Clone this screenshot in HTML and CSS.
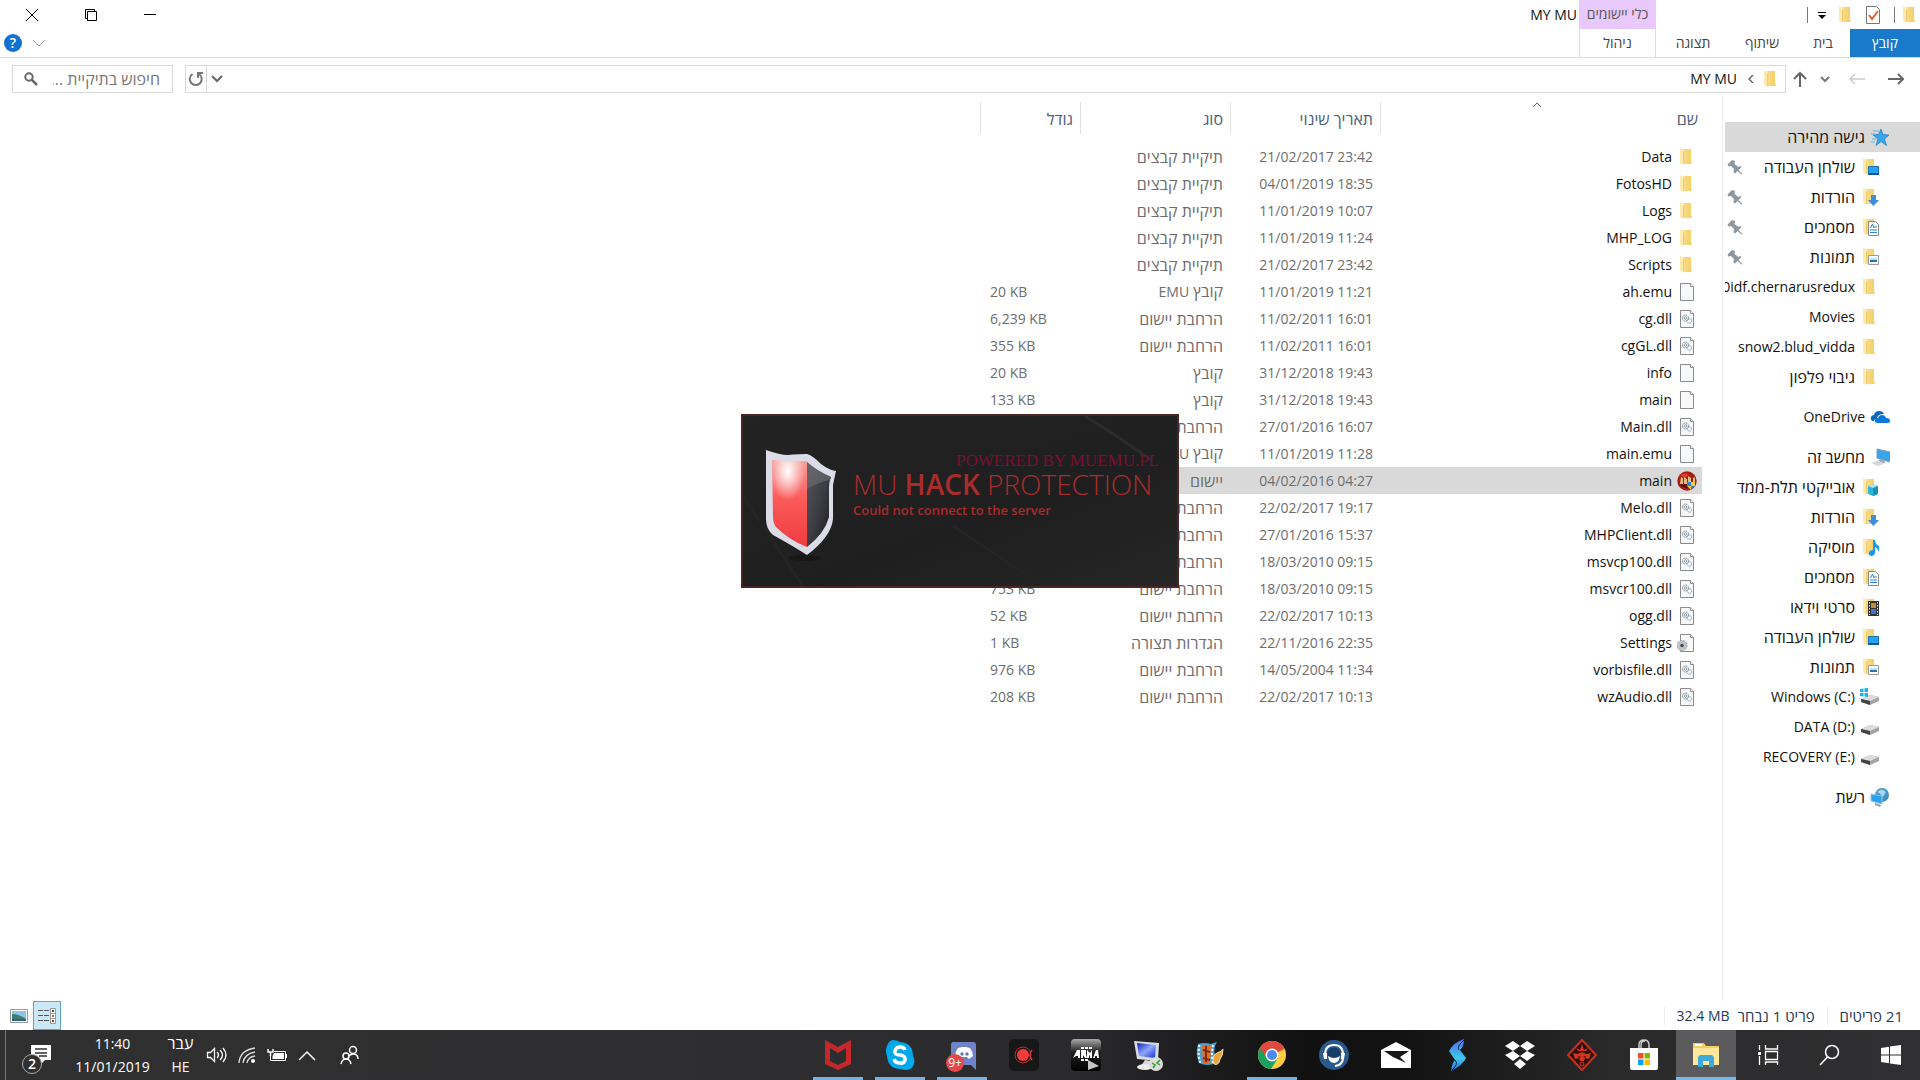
FILE: index.html
```html
<!DOCTYPE html>
<html lang="he" dir="rtl">
<head>
<meta charset="utf-8">
<title>MY MU</title>
<link rel="stylesheet" href="styles.css">
</head>
<body>
<svg class="sprite" width="0" height="0" aria-hidden="true">
  <defs>
    <linearGradient id="gFold" x1="0" x2="1"><stop offset="0" stop-color="#f9dc8c"/><stop offset="1" stop-color="#f4cf63"/></linearGradient>
    <linearGradient id="gRed" x1="0" y1="0" x2="0" y2="1"><stop offset="0" stop-color="#f6a09a"/><stop offset=".45" stop-color="#fb5a5a"/><stop offset="1" stop-color="#f03c40"/></linearGradient>
    <radialGradient id="gShine" cx=".45" cy=".2" r=".5"><stop offset="0" stop-color="#fff"/><stop offset="1" stop-color="#fff" stop-opacity="0"/></radialGradient>
    <linearGradient id="gDark" x1="0" y1="0" x2="1" y2="1"><stop offset="0" stop-color="#55555a"/><stop offset=".5" stop-color="#3d3d44"/><stop offset="1" stop-color="#19191c"/></linearGradient>
    <linearGradient id="gS" x1="0" y1="0" x2="0" y2="1"><stop offset="0" stop-color="#4d6cf0"/><stop offset=".6" stop-color="#3fc8ea"/><stop offset="1" stop-color="#2a6fe0"/></linearGradient>
    <linearGradient id="gArma" x1="0" y1="0" x2="0" y2="1"><stop offset="0" stop-color="#aaa"/><stop offset=".4" stop-color="#222"/><stop offset="1" stop-color="#000"/></linearGradient>
    <linearGradient id="gMon" x1="0" y1="0" x2="1" y2="1"><stop offset="0" stop-color="#0a1fae"/><stop offset=".5" stop-color="#8fa6ff"/><stop offset="1" stop-color="#1130d0"/></linearGradient>
    <symbol id="folder" viewBox="0 0 20 20"><path d="M6 2h8v12l1 2-1 1H6z" fill="url(#gFold)"/><path d="M3 1l4 2v13l-1 2-3-2z" fill="#fdeab0"/><path d="M6 5v12l1-1V4z" fill="#efcb6b"/></symbol>
    <symbol id="file" viewBox="0 0 20 20"><path d="M3.500 1.500h10l3 3v14h-13z" fill="#f7f8fa" stroke="#8b8b8b"/><path d="M13.500 1.500v3h3" fill="#fff" stroke="#8b8b8b"/></symbol>
    <symbol id="dll" viewBox="0 0 20 20"><use href="#file"/><g fill="none"><circle cx="8.500" cy="9" r="3" stroke="#6c7781" stroke-dasharray="1 .6"/><circle cx="8.500" cy="9" r="1.300" stroke="#899"/><circle cx="12.500" cy="12" r="2.200" stroke="#6a97b7" stroke-dasharray="1 .5"/></g></symbol>
    <symbol id="ini" viewBox="0 0 20 20"><use href="#file"/><circle cx="5" cy="12.500" r="5" fill="#bfc5c9" stroke="#98a0a5" stroke-dasharray="2 1"/><circle cx="5" cy="12.500" r="1.700" fill="#444"/></symbol>
    <symbol id="game" viewBox="0 0 20 20"><circle cx="10" cy="10" r="9.700" fill="#a81c16"/><path d="M3 4q5-3 9 0l-4 3z" fill="#e0402a"/><path d="M2 14q8 7 15-1l-5-2z" fill="#641010"/><path d="M3 13l1-7 2 1v6zm4 0V6l3 2v5zm4-1V5l3 2v5zm5-1V7l2-1v5z" fill="#e5bd83"/><path d="M10 11h4v4h-4z" fill="#2d7fd1"/><path d="M14 11h4v4h-4z" fill="#f4cd3a"/><path d="M10 15h4v4z" fill="#f4cd3a"/><path d="M14 15h4l-4 4z" fill="#2d7fd1"/></symbol>
    <symbol id="desk" viewBox="0 0 20 20"><use href="#folder"/><path d="M8.500 9.500h10v8h-10z" fill="#25a3f2" stroke="#1871b4"/><path d="M8 16h11v2H8z" fill="#135a95"/></symbol>
    <symbol id="down" viewBox="0 0 20 20"><use href="#folder"/><path d="M11 8h5v5h3l-5.500 6L8 13h3z" fill="#3d8fd9"/></symbol>
    <symbol id="docs" viewBox="0 0 20 20"><use href="#folder"/><path d="M8.500 4.500h7l3 3v11h-10z" fill="#fff" stroke="#888"/><path d="M10 13h7M10 15.500h7M14 10h3" stroke="#2a86cf"/><path d="M10.500 11l2-4 1.500 4" stroke="#2a86cf" fill="none"/></symbol>
    <symbol id="pics" viewBox="0 0 20 20"><use href="#folder"/><path d="M8.500 8.500h10v9h-10z" fill="#fff" stroke="#999"/><path d="M10 11h7v4h-7z" fill="#b6e0f5"/><path d="M10 13h7v2h-7z" fill="#336f9b"/></symbol>
    <symbol id="cube" viewBox="0 0 20 20"><use href="#folder"/><path d="M8 9l5-1.500L18 9v8l-5 2-5-2z" fill="#2fb8d6"/><path d="M8 9l5-1.500L18 9l-5 2z" fill="#a6e8f2"/><path d="M13 11l5-2v8l-5 2z" fill="#1793ba"/></symbol>
    <symbol id="music" viewBox="0 0 20 20"><use href="#folder"/><path d="M13 3h2q0 4 4 6 1 3-1 6 0-4-3-5v5q0 4-4 4-3-1-2-4 1-2 4-2z" fill="#159af0"/></symbol>
    <symbol id="video" viewBox="0 0 20 20"><use href="#folder"/><path d="M8 4h11v15H8z" fill="#333"/><path d="M11 6h5v5h-5z" fill="#c28d3c"/><path d="M11 12h5v5h-5z" fill="#3f74c9"/><path d="M9.500 5v13M17.500 5v13" stroke="#eee" stroke-dasharray="1.500 1.500"/></symbol>
    <symbol id="drive" viewBox="0 0 20 20"><path d="M1 12l9-4 9 2v4l-9 4-9-3z" fill="#a4a4a4"/><path d="M1 12l9-4 9 2-9 4z" fill="#dcdcdc"/><path d="M1 12l9 2v4l-9-3z" fill="#444"/></symbol>
    <symbol id="windrive" viewBox="0 0 20 20"><use href="#drive"/><path d="M0 2l3.500-.5V5H0zM4.500 1.300L8 1v4H4.500zM0 6h3.500v3.500L0 9zM4.500 6H8v4l-3.500-.5z" fill="#12b4ea"/></symbol>
    <symbol id="star" viewBox="0 0 20 20"><path d="M11 2l2 5.500 6 .5-4.500 4 2 6.500-5.500-4-5 4 2-6.500L3 8l5.500-.5z" fill="#38a7ee" stroke="#187bc0" stroke-width=".7"/><path d="M3 4h6M1 7h5M2 12h4M1 15h4" stroke="#5cb8f0"/></symbol>
    <symbol id="cloud" viewBox="0 0 20 20"><path d="M3 14q-3-1-2-4 1-2 3-2 1-4 5-4 4 0 5 3-7 0-7 5-3 0-3 2z" fill="#0c66bd"/><path d="M7 16q-3-1-2-3 1-2 3-2 1-3 4-3t4 3q4 0 4 3 0 2-2 2z" fill="#0a78d6"/></symbol>
    <symbol id="pc" viewBox="0 0 20 20"><path d="M7 2l13 3v10L7 11z" fill="#36a6e8" stroke="#7a9cb5"/><path d="M1 16l8-3 7 3-8 3z" fill="#d3d7de"/><path d="M10 12l5 2-1 2-5-2z" fill="#9ba4b0"/></symbol>
    <symbol id="net" viewBox="0 0 20 20"><circle cx="12" cy="8" r="7" fill="#4592c2"/><path d="M7 5q5-5 9 0l-3 5q-3-4-6-5z" fill="#a6d4ea"/><path d="M1 7l11 2v8L1 14z" fill="#2ea0e8" stroke="#8fc6ea"/><path d="M5 16l6 2-1 2-5-2z" fill="#8ea5b6"/></symbol>
    <symbol id="pin" viewBox="0 0 16 16"><path d="M5 1l3 1-.5 3 4 3 2-1 1 1-3 3 4 4-1 .5-4-3.500-2.500 2.500-1.500-1L7 10 4 7 1.500 7.500l-1-2z" fill="#8d979d"/></symbol>
    <symbol id="details" viewBox="0 0 20 20"><path d="M1 4.500h5M7 4.500h5M1 9.500h5M7 9.500h5M1 14.500h5M7 14.500h5" stroke="#555"/><path d="M13.500 2.500h5v15h-5zM13.500 7.500h5M13.500 12.500h5" stroke="#999" fill="#fff"/><path d="M15 4h2v2h-2z" fill="#358"/><path d="M15 9h2v2h-2z" fill="#874"/><path d="M15 14h2v2h-2z" fill="#b22"/></symbol>
  </defs>
</svg>

<div class="window">
  <header class="top">
    <div class="ribbon">
      <div class="start-side">
        <div class="quick">
          <svg width="20" height="20"><use href="#folder"/></svg>
          <i class="bar"></i>
          <svg class="props" width="20" height="20" viewBox="0 0 20 20"><path d="M3.500 1.500h10l3 3v14h-13z" fill="#fff" stroke="#777"/><path d="M6 10l3 4 6-8" stroke="#e2622b" stroke-width="2" fill="none"/></svg>
          <svg width="20" height="20"><use href="#folder"/></svg>
          <svg class="more" width="8" height="8" viewBox="0 0 8 8"><path d="M0 1.500h8" stroke="#000"/><path d="M0 4h8L4 8z"/></svg>
          <i class="bar"></i>
        </div>
        <nav class="tabs">
          <button class="tab file-tab">קובץ</button><button class="tab tab-home">בית</button><button class="tab tab-share">שיתוף</button><button class="tab tab-view">תצוגה</button>
        </nav>
      </div>
      <div class="context"><div class="context-title">כלי יישומים</div><button class="context-tab">ניהול</button></div>
      <h1 class="title">MY MU</h1>
      <div class="end-side">
        <div class="controls">
          <button aria-label="מזעור"><svg width="14" height="14" viewBox="0 0 14 14"><path d="M1 6.500h12" stroke="#000"/></svg></button>
          <button aria-label="שחזור"><svg width="14" height="14" viewBox="0 0 14 14"><path d="M3.500 3.500h9v9h-9zM3.500 10.500h-2v-9h9v2" fill="none" stroke="#000"/></svg></button>
          <button aria-label="סגירה"><svg width="14" height="14" viewBox="0 0 14 14"><path d="M1 1l12 12M13 1L1 13" stroke="#000"/></svg></button>
        </div>
        <div class="help">
          <svg width="14" height="8" viewBox="0 0 14 8"><path d="M1 1l6 6 6-6" fill="none" stroke="#999"/></svg>
          <button class="help-button" aria-label="עזרה">?</button>
        </div>
      </div>
    </div>
    <div class="address-row">
      <div class="nav-buttons">
        <button aria-label="הקודם"><svg width="16" height="12" viewBox="0 0 16 12"><path d="M0 6h15M10 1l5 5-5 5" fill="none" stroke="#666" stroke-width="2"/></svg></button>
        <button aria-label="הבא"><svg width="16" height="12" viewBox="0 0 16 12"><path d="M16 6H1M6 1L1 6l5 5" fill="none" stroke="#ccc" stroke-width="1.500"/></svg></button>
        <button class="slim" aria-label="מיקומים אחרונים"><svg width="10" height="7" viewBox="0 0 10 7"><path d="M1 1l4 4 4-4" fill="none" stroke="#777" stroke-width="2"/></svg></button>
        <button class="slim" aria-label="למעלה"><svg width="14" height="16" viewBox="0 0 14 16"><path d="M7 16V2M1 8l6-6 6 6" fill="none" stroke="#666" stroke-width="2"/></svg></button>
      </div>
      <div class="address">
        <svg width="20" height="20"><use href="#folder"/></svg>
        <svg class="crumb" width="6" height="8" viewBox="0 0 6 8"><path d="M5 0L1 4l4 4" fill="none" stroke="#666" stroke-width="1.500"/></svg>
        <span class="path">MY MU</span>
        <button aria-label="הצג מיקומים"><svg width="12" height="8" viewBox="0 0 12 8"><path d="M1 1l5 5 5-5" fill="none" stroke="#666" stroke-width="2"/></svg></button>
        <button class="refresh" aria-label="רענון"><svg width="16" height="16" viewBox="0 0 16 16"><path d="M4.500 3A6 6 0 1 0 11 3" fill="none" stroke="#777" stroke-width="2"/><path d="M15 2h-5v5" fill="none" stroke="#777" stroke-width="2"/></svg></button>
      </div>
      <label class="search"><input type="search" placeholder="חיפוש בתיקיית ..." aria-label="חיפוש"><svg width="14" height="14" viewBox="0 0 14 14"><circle cx="5" cy="5" r="3.700" fill="none" stroke="#666" stroke-width="2"/><path d="M8 8l5 5" stroke="#666" stroke-width="2.500"/></svg></label>
    </div>
  </header>

  <div class="body">
    <aside class="tree">
      <ul>
        <li class="root current"><svg><use href="#star"/></svg><span class="he">גישה מהירה</span></li>
        <li><svg><use href="#desk"/></svg><span class="he">שולחן העבודה</span><svg class="pin"><use href="#pin"/></svg></li>
        <li><svg><use href="#down"/></svg><span class="he">הורדות</span><svg class="pin"><use href="#pin"/></svg></li>
        <li><svg><use href="#docs"/></svg><span class="he">מסמכים</span><svg class="pin"><use href="#pin"/></svg></li>
        <li><svg><use href="#pics"/></svg><span class="he">תמונות</span><svg class="pin"><use href="#pin"/></svg></li>
        <li><svg><use href="#folder"/></svg><span><bdi dir="ltr">.0idf.chernarusredux</bdi></span></li>
        <li><svg><use href="#folder"/></svg><span>Movies</span></li>
        <li><svg><use href="#folder"/></svg><span>snow2.blud_vidda</span></li>
        <li><svg><use href="#folder"/></svg><span class="he">גיבוי פלפון</span></li>
      </ul>
      <ul><li class="root"><svg><use href="#cloud"/></svg><span>OneDrive</span></li></ul>
      <ul>
        <li class="root"><svg><use href="#pc"/></svg><span class="he">מחשב זה</span></li>
        <li><svg><use href="#cube"/></svg><span class="he">אובייקטי תלת-ממד</span></li>
        <li><svg><use href="#down"/></svg><span class="he">הורדות</span></li>
        <li><svg><use href="#music"/></svg><span class="he">מוסיקה</span></li>
        <li><svg><use href="#docs"/></svg><span class="he">מסמכים</span></li>
        <li><svg><use href="#video"/></svg><span class="he">סרטי וידאו</span></li>
        <li><svg><use href="#desk"/></svg><span class="he">שולחן העבודה</span></li>
        <li><svg><use href="#pics"/></svg><span class="he">תמונות</span></li>
        <li><svg><use href="#windrive"/></svg><span><bdi dir="ltr">Windows (C:)</bdi></span></li>
        <li><svg><use href="#drive"/></svg><span><bdi dir="ltr">DATA (D:)</bdi></span></li>
        <li><svg><use href="#drive"/></svg><span><bdi dir="ltr">RECOVERY (E:)</bdi></span></li>
      </ul>
      <ul><li class="root"><svg><use href="#net"/></svg><span class="he">רשת</span></li></ul>
    </aside>

    <main class="files">
      <table>
        <thead><tr>
          <th class="c-name"><div>שם<svg class="sort" width="10" height="6" viewBox="0 0 10 6"><path d="M1 5l4-4 4 4" fill="none" stroke="#666"/></svg></div></th>
          <th class="c-mid"><div>תאריך שינוי</div></th><th class="c-mid"><div>סוג</div></th><th class="c-size"><div>גודל</div></th>
        </tr></thead>
        <tbody>
          <tr><td><svg><use href="#folder"/></svg>Data</td><td><bdi dir="ltr">21/02/2017 23:42</bdi></td><td>תיקיית קבצים</td><td></td></tr>
          <tr><td><svg><use href="#folder"/></svg>FotosHD</td><td><bdi dir="ltr">04/01/2019 18:35</bdi></td><td>תיקיית קבצים</td><td></td></tr>
          <tr><td><svg><use href="#folder"/></svg>Logs</td><td><bdi dir="ltr">11/01/2019 10:07</bdi></td><td>תיקיית קבצים</td><td></td></tr>
          <tr><td><svg><use href="#folder"/></svg>MHP_LOG</td><td><bdi dir="ltr">11/01/2019 11:24</bdi></td><td>תיקיית קבצים</td><td></td></tr>
          <tr><td><svg><use href="#folder"/></svg>Scripts</td><td><bdi dir="ltr">21/02/2017 23:42</bdi></td><td>תיקיית קבצים</td><td></td></tr>
          <tr><td><svg><use href="#file"/></svg>ah.emu</td><td><bdi dir="ltr">11/01/2019 11:21</bdi></td><td>קובץ <bdi>EMU</bdi></td><td>20 KB</td></tr>
          <tr><td><svg><use href="#dll"/></svg>cg.dll</td><td><bdi dir="ltr">11/02/2011 16:01</bdi></td><td>הרחבת יישום</td><td>6,239 KB</td></tr>
          <tr><td><svg><use href="#dll"/></svg>cgGL.dll</td><td><bdi dir="ltr">11/02/2011 16:01</bdi></td><td>הרחבת יישום</td><td>355 KB</td></tr>
          <tr><td><svg><use href="#file"/></svg>info</td><td><bdi dir="ltr">31/12/2018 19:43</bdi></td><td>קובץ</td><td>20 KB</td></tr>
          <tr><td><svg><use href="#file"/></svg>main</td><td><bdi dir="ltr">31/12/2018 19:43</bdi></td><td>קובץ</td><td>133 KB</td></tr>
          <tr><td><svg><use href="#dll"/></svg>Main.dll</td><td><bdi dir="ltr">27/01/2016 16:07</bdi></td><td>הרחבת יישום</td><td></td></tr>
          <tr><td><svg><use href="#file"/></svg>main.emu</td><td><bdi dir="ltr">11/01/2019 11:28</bdi></td><td>קובץ <bdi>EMU</bdi></td><td></td></tr>
          <tr class="selected"><td><svg><use href="#game"/></svg>main</td><td><bdi dir="ltr">04/02/2016 04:27</bdi></td><td>יישום</td><td></td></tr>
          <tr><td><svg><use href="#dll"/></svg>Melo.dll</td><td><bdi dir="ltr">22/02/2017 19:17</bdi></td><td>הרחבת יישום</td><td></td></tr>
          <tr><td><svg><use href="#dll"/></svg>MHPClient.dll</td><td><bdi dir="ltr">27/01/2016 15:37</bdi></td><td>הרחבת יישום</td><td></td></tr>
          <tr><td><svg><use href="#dll"/></svg>msvcp100.dll</td><td><bdi dir="ltr">18/03/2010 09:15</bdi></td><td>הרחבת יישום</td><td></td></tr>
          <tr><td><svg><use href="#dll"/></svg>msvcr100.dll</td><td><bdi dir="ltr">18/03/2010 09:15</bdi></td><td>הרחבת יישום</td><td>753 KB</td></tr>
          <tr><td><svg><use href="#dll"/></svg>ogg.dll</td><td><bdi dir="ltr">22/02/2017 10:13</bdi></td><td>הרחבת יישום</td><td>52 KB</td></tr>
          <tr><td><svg><use href="#ini"/></svg>Settings</td><td><bdi dir="ltr">22/11/2016 22:35</bdi></td><td>הגדרות תצורה</td><td>1 KB</td></tr>
          <tr><td><svg><use href="#dll"/></svg>vorbisfile.dll</td><td><bdi dir="ltr">14/05/2004 11:34</bdi></td><td>הרחבת יישום</td><td>976 KB</td></tr>
          <tr><td><svg><use href="#dll"/></svg>wzAudio.dll</td><td><bdi dir="ltr">22/02/2017 10:13</bdi></td><td>הרחבת יישום</td><td>208 KB</td></tr>
        </tbody>
      </table>
    </main>
  </div>

  <footer class="status">
    <span class="count">21 פריטים</span>
    <span class="picked">פריט 1 נבחר<bdi>32.4 MB</bdi></span>
    <div class="views">
      <button class="on" aria-label="פרטים"><svg width="20" height="20"><use href="#details"/></svg></button>
      <button aria-label="תמונות ממוזערות"><svg width="18" height="14" viewBox="0 0 18 14"><path d="M.5.5h17v13H.500z" fill="#fff" stroke="#999"/><path d="M2 2h14v10H2z" fill="#8fc3ea"/><path d="M2 5q7 0 14 5v2H2z" fill="#3b7f6d"/><path d="M2 10h14v2H2z" fill="#2c5f9e"/></svg></button>
    </div>
  </footer>
</div>

<section class="splash" dir="ltr" role="dialog" aria-label="MU Hack Protection">
  <svg class="streak" viewBox="0 0 434 170" preserveAspectRatio="none"><path d="M342 0q40 25 66 44" stroke="#2c2c2c" stroke-width="3" fill="none"/><path d="M0 80l60 90M210 110l90 60" stroke="#242424" stroke-width="3"/><ellipse cx="62" cy="142" rx="16" ry="3" fill="#181818"/></svg>
  <svg class="shield" width="72" height="108" viewBox="0 0 72 108"><path d="M1 1q14 5 22 5 12-1 19-1 5 1 14 10 8 6 15 7l-3 14v34q-2 18-26 36Q28 97 8 86 1 80 1 70z" fill="#dcdce8"/><path d="M7 11q16 2 35 1v86Q24 91 11 78 8 74 8 68z" fill="url(#gRed)"/><path d="M7 11q16 2 35 1v30Q20 50 8 68z" fill="url(#gShine)"/><path d="M42 13q10 9 24 15-2 5-2 10v30q-4 16-22 30z" fill="url(#gDark)"/><path d="M42 40q14-8 23-9v-4q-13-5-23-14z" fill="#77777c" opacity=".5"/></svg>
  <div class="splash-text">
    <p class="powered">POWERED BY MUEMU.PL</p>
    <p class="brand">MU <b>HACK</b> PROTECTION</p>
    <p class="message">Could not connect to the server</p>
  </div>
</section>

<div class="taskbar">
  <div class="apps">
    <button class="start" aria-label="התחל"><svg width="22" height="22" viewBox="0 0 22 22"><path d="M1 4l8-1.200v7.700H1zM10 2.600L21 1v9.500H10zM1 11.500h8v7.700L1 18zM10 11.500h11V21l-11-1.600z" fill="#fff"/></svg></button>
    <button aria-label="חיפוש"><svg width="22" height="22" viewBox="0 0 22 22"><circle cx="13" cy="8" r="6.500" fill="none" stroke="#fff" stroke-width="1.500"/><path d="M8.500 13L1 21" stroke="#fff" stroke-width="1.700"/></svg></button>
    <button aria-label="תצוגת משימות"><svg width="22" height="22" viewBox="0 0 22 22"><path d="M2.500 1v5M2.500 12v9M8.500 1v4h12V1M8.500 7.500h12v8h-12zM8.500 21v-3h12v3" fill="none" stroke="#fff" stroke-width="1.300"/><path d="M1 8h3v3H1z" fill="#fff"/></svg></button>
    <button class="active" aria-label="סייר הקבצים"><svg width="28" height="28" viewBox="0 0 28 28"><path d="M1 2h11l2 3h13v19H1z" fill="#f3cf62"/><path d="M1 7h26v17H1z" fill="#fde79b"/><path d="M3 3h7v2H3z" fill="#fff"/><path d="M6 26V16l2-2h12l2 2v10h-5v-6h-6v6z" fill="#3fa9dc"/></svg></button>
    <button aria-label="חנות"><svg width="30" height="32" viewBox="0 0 30 32"><path d="M10 9V6q0-5 5-5t5 5v3M12 9V6q0-4 4-4" fill="none" stroke="#ccc" stroke-width="1.500"/><path d="M1 9h28v20q0 2-2 2H3q-2 0-2-2z" fill="#fff"/><path d="M9 14h5.500v5.500H9z" fill="#f25022"/><path d="M15.500 14H21v5.500h-5.500z" fill="#7fba00"/><path d="M9 20.500h5.500V26H9z" fill="#00a4ef"/><path d="M15.500 20.500H21V26h-5.500z" fill="#ffb900"/></svg></button>
    <button aria-label="OMEN"><svg width="32" height="32" viewBox="0 0 32 32"><path d="M16 1l14 15-14 15L2 16z" fill="#2c0f0c" stroke="#c8321c" stroke-width="2"/><path d="M7 14l5 1 4-2 4 2 5-1-2 6-4-1-1 3h-4l-1-3-4 1zM12 12l-2-3 4 2 2-6 2 6 4-2-2 3z" fill="#d1351e"/><path d="M12 17l3 1-2 1zM20 17l-3 1 2 1z" fill="#2c0f0c"/><circle cx="16" cy="25" r="2" fill="none" stroke="#d1351e"/></svg></button>
    <button aria-label="Dropbox"><svg width="32" height="30" viewBox="0 0 32 30"><path d="M9 1l7 5-7 5-8-5zM23 1l8 5-8 5-7-5zM1 15l8-4 7 5-7 5zM31 15l-8-4-7 5 7 5zM10 24l6-5 6 5-6 5z" fill="#fff"/></svg></button>
    <button aria-label="S"><svg width="20" height="34" viewBox="0 0 20 34"><path d="M16 1q0 8-4 11l6 8q-3 7-15 13 1-8 4-11l-6-9Q6 4 16 1z" fill="url(#gS)"/><path d="M16 2q-8 7-5 10M4 32q7-6 3-10" stroke="#123" fill="none"/></svg></button>
    <button aria-label="דואר"><svg width="32" height="28" viewBox="0 0 32 28"><path d="M1 9l15-8 15 8v18H1z" fill="#fff"/><path d="M4 10h25l-9 6 6 6-13-6z" fill="#161616"/></svg></button>
    <button aria-label="TeamSpeak"><svg width="32" height="32" viewBox="0 0 32 32"><circle cx="16" cy="16" r="15" fill="#285a8d"/><path d="M7 16q0-10 9-10t9 10" fill="none" stroke="#fff" stroke-width="2"/><circle cx="16" cy="15" r="6.500" fill="#173d65"/><path d="M5 14h4v6H6zM23 14h4l-1 6h-3zM10 17q6 4 12 0-1 7-6 7t-6-7z" fill="#fff"/><path d="M25 20q-1 6-8 7" fill="none" stroke="#fff" stroke-width="2"/></svg></button>
    <button class="running" aria-label="Chrome"><svg width="30" height="30" viewBox="0 0 30 30"><circle cx="15" cy="15" r="14" fill="#ffcd40"/><path d="M15 15L3 8a14 14 0 0 1 24.500 1z" fill="#de4a3c"/><path d="M15 15L3 8a14 14 0 0 0 11 21l7-11z" fill="#1aa260"/><path d="M15 9h12.700A14 14 0 0 0 3 8l6 9z" fill="#de4a3c"/><circle cx="15" cy="15" r="6.500" fill="#fff"/><circle cx="15" cy="15" r="5" fill="#4a8af4"/></svg></button>
    <button aria-label="סרטים"><svg width="30" height="30" viewBox="0 0 30 30"><path d="M3 4q6-2 13 0l6-2q-4 6-2 13l1 8q-9 4-17 0-4-9-1-19z" fill="#4ba0d1"/><path d="M7 5h9l-1 19H8z" fill="#e66d20"/><path d="M4.500 5q-2 9 1 19M18 5q-2 9 0 19" fill="none" stroke="#fff" stroke-width="2" stroke-dasharray="2 2"/><path d="M8 10l7 2M8 18l7 2M11 6v16" stroke="#7a2b12" stroke-width="2"/><path d="M19 24q-3-8 3-11 6-2 6-4 0 7-3 10-1 7-6 5z" fill="#e8a33a" stroke="#f6e2a5"/></svg></button>
    <button aria-label="שולחן עבודה מרוחק"><svg width="32" height="32" viewBox="0 0 32 32"><path d="M2 2l25 2-1 18-21-2z" fill="#d7dce4"/><path d="M5 4l19 2-1 13-16-2z" fill="url(#gMon)"/><path d="M13 21l6 1v5H9z" fill="#d9d9d9"/><ellipse cx="13" cy="28" rx="8" ry="3" fill="#eee"/><circle cx="24" cy="25" r="7" fill="#dcdcdc"/><path d="M20 24l3 2-2 3M28 21l-3 3 3 2" fill="none" stroke="#28a428" stroke-width="1.500"/></svg></button>
    <button aria-label="ARMA"><svg width="30" height="32" viewBox="0 0 30 32"><rect width="30" height="32" rx="4" fill="url(#gArma)"/><path d="M2 19l4-8h3v8H7v-2H5zM10 11h5v4l1 4h-2l-2-3v3h-2zM16 19v-8l3 3 2-3v8h-2v-3l-1 1v2zM22 19l3-8h2l1 8h-2v-2h-2v2z" fill="#fff"/><path d="M10 9h11M10 21h8" stroke="#fff" stroke-width="2" stroke-dasharray="3 1"/><path d="M17 21l11 6-11 4z" fill="#c5c5c5"/></svg></button>
    <button aria-label="הקלטה"><svg width="30" height="32" viewBox="0 0 30 32"><rect width="30" height="32" rx="5" fill="#171717"/><circle cx="14" cy="16" r="6" fill="#f33d3d"/><circle cx="14" cy="16" r="8" fill="none" stroke="#c02c2c"/><path d="M23 11q-4 5 0 10" fill="none" stroke="#e03434" stroke-width="1.500"/></svg></button>
    <button class="running" aria-label="Discord"><svg width="30" height="32" viewBox="0 0 30 32"><path d="M6 3h20q3 0 3 3v25l-5-5H6q-2 0-2-2V6q0-3 2-3z" fill="#6f83c9"/><path d="M11 9l4-1h4l4 1q3 4 3 8l-4 3-2-2h-6l-2 2-4-3q0-4 3-8z" fill="#fff"/><circle cx="15" cy="15" r="1.700" fill="#6076bf"/><circle cx="20" cy="15" r="1.700" fill="#6076bf"/></svg><span class="badge" dir="ltr">9+</span></button>
    <button class="running" aria-label="Skype"><svg width="30" height="32" viewBox="0 0 30 32"><path d="M8 1q4 0 7 2 13 1 13 14 2 3 1 8-2 6-8 6-3 0-5-1Q3 30 2 17 0 12 2 7q2-6 6-6z" fill="#00a8ec"/><path d="M20 11q-1-3-5-3t-5 4 5 4q6 1 5 5t-5 3q-5 0-6-4" fill="none" stroke="#fff" stroke-width="3.500"/></svg></button>
    <button class="running" aria-label="McAfee"><svg width="28" height="32" viewBox="0 0 28 32"><path d="M1 1l13 7 13-7v24l-13 6-13-6zM6 9v13l8 4 8-4V9l-8 5z" fill="#c5282b" fill-rule="evenodd"/></svg></button>
  </div>
  <div class="tray">
    <button class="people" aria-label="אנשים"><svg width="20" height="20" viewBox="0 0 20 20"><g fill="none" stroke="#fff" stroke-width="1.500"><circle cx="13" cy="5" r="3.500"/><circle cx="6" cy="11" r="3"/><path d="M1 19q1-5 5-5t5 5M9 11q2-2 4-2 5 0 5 5"/></g></svg></button>
    <button class="tray-icon" aria-label="סמלים מוסתרים"><svg width="18" height="11" viewBox="0 0 18 11"><path d="M1 10l8-8 8 8" fill="none" stroke="#fff" stroke-width="1.500"/></svg></button>
    <button class="tray-icon" aria-label="סוללה"><svg width="20" height="16" viewBox="0 0 20 16"><path d="M7 6h10v6H5.500V9z" fill="#fff"/><path d="M7 4.500h11.500v9H3.500V9M19.500 7v4" fill="none" stroke="#fff"/><path d="M1 2v3h5V2M3.500 5v4" fill="none" stroke="#fff" stroke-width="1.500"/></svg></button>
    <button class="tray-icon" aria-label="רשת"><svg width="18" height="18" viewBox="0 0 18 18"><path d="M1 17Q2 4 17 2M5 17Q6 8 17 6M9 17q1-6 8-7" fill="none" stroke="#ddd" stroke-width="1.300"/><circle cx="15" cy="15" r="2" fill="#fff"/></svg></button>
    <button class="tray-icon" aria-label="עוצמת קול"><svg width="22" height="20" viewBox="0 0 22 20"><path d="M1.500 7.500h3l4-4v13l-4-4h-3z M11 7q3 3 0 6M14 5q5 5 0 10M17 3q6 7 0 14" fill="none" stroke="#fff" stroke-width="1.300"/></svg></button>
    <div class="lang"><span class="he">עבר</span><span>HE</span></div>
    <div class="clock"><span>11:40</span><span><bdi dir="ltr">11/01/2019</bdi></span></div>
    <button class="notes" aria-label="הודעות"><svg width="22" height="22" viewBox="0 0 22 22"><path d="M1 1h20v15h-6l-5 5v-5H1z" fill="#fff"/><path d="M5 5h12M5 9h12M9 12h8" stroke="#303030" stroke-width="1.300"/></svg><span class="count-badge">2</span></button>
    <i class="edge"></i>
  </div>
</div>
</body>
</html>
```
FILE: styles.css
```css
* { box-sizing: border-box; }
body {
  margin: 0;
  min-height: 100vh;
  display: flex;
  flex-direction: column;
  background: #fff;
  color: #111;
  font: 14px/20px "Open Sans", "Noto Sans", sans-serif;
}
button { margin: 0; padding: 0; border: 0; background: none; font: inherit; color: inherit; }
svg { display: block; flex: none; }
.sprite { position: absolute; }
.he { font-size: 16px; }
.window { flex: 1; display: flex; flex-direction: column; }

/* Title bar and ribbon tabs */
.ribbon { display: flex; height: 58px; border-bottom: 1px solid #d9dadb; }
.start-side { width: 264px; display: flex; flex-direction: column; }
.quick { display: flex; align-items: center; height: 29px; gap: 8px; }
.quick .bar { width: 1px; height: 16px; background: #777; }
.quick svg:first-child { margin-inline-end: -3px; }
.quick .props { margin-inline: 3px -1px; }
.quick .more { margin-inline: 2px; }
.tabs { display: flex; height: 28px; font-size: 14px; color: #444; }
.file-tab { width: 70px; background: #1979ca; color: #fff; }
.tab-home { width: 54px; }
.tab-share { width: 68px; }
.tab-view { width: 70px; }
.context { width: 77px; font-size: 14px; text-align: center; }
.context-title { height: 29px; line-height: 28px; background: #e9c9fb; color: #555; }
.context-tab { width: 100%; height: 28px; border: solid #ddd; border-width: 0 1px; color: #444; }
.title { margin: 0; padding-inline-start: 2px; font-size: 14px; font-weight: 400; line-height: 30px; }
.end-side { margin-inline-start: auto; }
.controls { display: flex; height: 29px; padding-inline-end: 2px; }
.controls button { width: 59px; display: flex; align-items: center; justify-content: center; }
.help { display: flex; align-items: center; justify-content: flex-end; gap: 10px; height: 28px; padding-inline-end: 4px; }
.help-button { width: 18px; height: 18px; border-radius: 9px; background: #0f72cf; color: #fff; font-weight: 600; line-height: 18px; }

/* Address row */
.address-row { display: flex; align-items: center; padding: 7px 5px 0 12px; }
.nav-buttons { display: flex; width: 129px; }
.nav-buttons button { width: 39px; display: flex; align-items: center; justify-content: center; }
.nav-buttons .slim { width: 25px; }
.address { flex: 1; display: flex; align-items: center; height: 28px; padding-inline-start: 4px; border: 1px solid #d9d9d9; }
.crumb { margin-inline: 7px 11px; }
.path { flex: 1; }
.address button { width: 20px; height: 26px; display: flex; align-items: center; justify-content: center; }
.address .refresh { border-inline-start: 1px solid #d9d9d9; width: 21px; }
.search { display: flex; align-items: center; width: 161px; height: 28px; margin-inline-start: 12px; padding: 0 12px 0 11px; border: 1px solid #d9d9d9; }
.search input { flex: 1; min-width: 0; padding: 0; border: 0; outline: 0; background: none; font: inherit; font-size: 16px; }
.search input::placeholder { color: #777; opacity: 1; }

/* Navigation tree */
.body { flex: 1; display: flex; }
.tree { width: 198px; padding-top: 29px; border-inline-end: 1px solid #f0f0f0; padding-inline-end: 2px; }
.tree ul { margin: 0 0 10px; padding: 0; list-style: none; }
.tree li { display: flex; align-items: center; gap: 5px; height: 30px; padding-inline-start: 40px; }
.tree li.root { padding-inline-start: 30px; }
.tree li span { flex: 1; overflow: hidden; white-space: nowrap; }
.tree svg { width: 20px; height: 20px; }
.tree .pin { width: 16px; height: 16px; margin-inline-end: 2px; }
.tree .current { background: #d9d9d9; }

/* File list */
.files { flex: 1; padding: 9px 20px 0 0; }
table { width: 722px; table-layout: fixed; border-collapse: collapse; }
th { padding: 0 0 9px; font-size: 16px; font-weight: 400; text-align: start; color: #4c607a; }
th div { position: relative; height: 32px; padding-inline-start: 7px; border-inline-end: 1px solid #e2e2e2; line-height: 34px; }
.c-name { width: 322px; }
.c-name div { padding-inline-start: 4px; }
.c-mid { width: 150px; }
.c-size { width: 100px; }
.sort { position: absolute; top: 0; right: 50%; }
td { height: 27px; padding: 0 7px; color: #6d6d6d; white-space: nowrap; }
td:first-child { display: flex; align-items: center; gap: 5px; padding: 0 5px; color: #111; }
td:nth-child(3) { font-size: 16px; }
td:nth-child(3) bdi { font-size: 14px; }
td:last-child { padding: 0 0 0 10px; direction: ltr; text-align: left; }
td svg { width: 20px; height: 20px; }
.selected { background: #d9d9d9; }

/* Status bar */
.status { display: flex; align-items: center; height: 29px; padding-inline: 17px 5px; font-size: 15px; color: #1e395b; }
.count { padding-inline-end: 12px; border-inline-end: 1px solid #eee; }
.picked { display: flex; gap: 8px; padding-inline: 12px; border-inline-end: 1px solid #eee; }
.picked bdi { font-size: 14px; }
.views { display: flex; margin-inline-start: auto; }
.views button { display: flex; align-items: center; justify-content: center; width: 28px; height: 29px; }
.views .on { background: #cce8f6; border: 1px solid #5aa7c8; }

/* Splash over the window */
.splash {
  position: absolute;
  left: calc(50% - 219px);
  top: 414px;
  width: 438px;
  height: 174px;
  display: flex;
  gap: 16px;
  padding: 33px 18px 0 22px;
  border: 2px solid #4a2727;
  background: linear-gradient(160deg, #232323, #1f1f1f 60%, #262626);
  color: #a92c2c;
}
.splash p { margin: 0; white-space: nowrap; }
.streak { position: absolute; inset: 0; width: 100%; height: 100%; }
.shield, .splash-text { position: relative; }
.splash-text { flex: 1; }
.powered { text-align: right; font: 17px/24px "Liberation Serif", serif; color: #7a0e35; }
.splash .brand { margin-top: -5px; font-size: 28px; line-height: 32px; font-weight: 300; }
.brand b { font-weight: 600; }
.message { font-size: 13px; line-height: 20px; font-weight: 600; }

/* Taskbar */
.taskbar { display: flex; justify-content: space-between; height: 50px; background: linear-gradient(90deg, #303030, #2e2e31 40%, #2a2a2d 56%, #111 68%, #121212 73%, #2a2a2b 84%, #303032); color: #fff; }
.apps { display: flex; gap: 2px; }
.apps button { position: relative; width: 60px; display: flex; align-items: center; justify-content: center; }
.apps .start { width: 58px; }
.apps .active { background: #5b5b5e; border-bottom: 3px solid #76b9ed; padding-top: 3px; }
.running::after { content: ""; position: absolute; bottom: 0; left: 5px; right: 5px; height: 3px; background: #76b1e2; }
.badge { position: absolute; left: 14px; bottom: 8px; width: 18px; height: 18px; border-radius: 9px; background: #e5484a; font-size: 12px; line-height: 18px; }
.tray { display: flex; align-items: stretch; padding-inline-end: 5px; }
.tray button { display: flex; align-items: center; justify-content: center; }
.people { width: 56px; }
.tray .tray-icon { width: 30px; }
.lang, .clock { display: flex; flex-direction: column; justify-content: center; align-items: center; line-height: 23px; }
.lang { width: 43px; }
.clock { width: 93px; }
.tray .notes { position: relative; width: 60px; padding-left: 10px; }
.count-badge { position: absolute; left: 16px; bottom: 6px; width: 20px; height: 20px; border: 1px solid #aaa; border-radius: 10px; background: #303030; line-height: 18px; font-weight: 600; }
.edge { width: 1px; background: #777; }
```
